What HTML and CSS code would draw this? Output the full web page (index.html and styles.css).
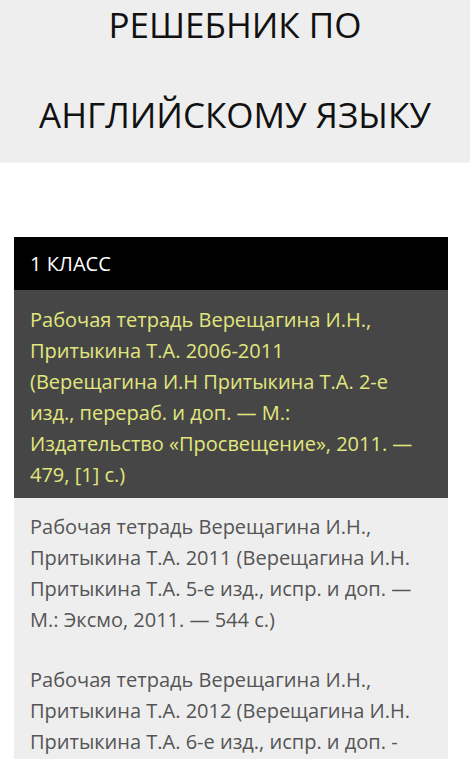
FILE: index.html
```html
<!DOCTYPE html>
<html lang="ru">
<head>
<meta charset="utf-8">
<title>Решебник по английскому языку</title>
<link rel="stylesheet" href="styles.css">
</head>
<body>
<header class="site-header">
  <h1 class="site-title">РЕШЕБНИК ПО<br>АНГЛИЙСКОМУ ЯЗЫКУ</h1>
</header>
<main class="content">
  <section class="grade">
    <h2 class="grade-title">1 КЛАСС</h2>
    <div class="book book-active">
      <p>Рабочая тетрадь Верещагина И.Н.,<br>Притыкина Т.А. 2006-2011<br>(Верещагина И.Н Притыкина Т.А. 2-е<br>изд., перераб. и доп. — М.:<br>Издательство «Просвещение», 2011. —<br>479, [1] с.)</p>
    </div>
    <div class="book">
      <p>Рабочая тетрадь Верещагина И.Н.,<br>Притыкина Т.А. 2011 (Верещагина И.Н.<br>Притыкина Т.А. 5-е изд., испр. и доп. —<br>М.: Эксмо, 2011. — 544 с.)</p>
      <p>Рабочая тетрадь Верещагина И.Н.,<br>Притыкина Т.А. 2012 (Верещагина И.Н.<br>Притыкина Т.А. 6-е изд., испр. и доп. -<br>М.: Эксмо, 2012. — 544 с.)</p>
    </div>
  </section>
</main>
</body>
</html>
```

FILE: styles.css
```css
html, body {
  margin: 0;
  padding: 0;
  background: #ffffff;
  font-family: "Open Sans", "Noto Sans", sans-serif;
}

.site-header {
  background: #eeeeee;
  border-bottom: 1px solid #f6f6f6;
  padding: 0 10px 2px;
  overflow: hidden;
}

.site-title {
  margin: -20px 0 0;
  font-size: 35px;
  font-weight: 400;
  line-height: 90px;
  text-align: center;
  color: #111111;
}

.content {
  padding: 74px 22px 0 14px;
}

.grade-title {
  margin: 0;
  height: 53px;
  line-height: 53px;
  padding: 0 16px;
  background: #000000;
  color: #ffffff;
  font-size: 20px;
  font-weight: 400;
}

.book {
  padding: 13px 0 14px 16px;
  background: #eeeeee;
  color: #555555;
  font-size: 20px;
  line-height: 31px;
  white-space: nowrap;
}

.book p {
  margin: 0 0 29px;
}

.book p:last-child {
  margin-bottom: 0;
}

.book-active {
  background: #464646;
  color: #e2e67e;
  padding-top: 14px;
  padding-bottom: 8px;
}
```
